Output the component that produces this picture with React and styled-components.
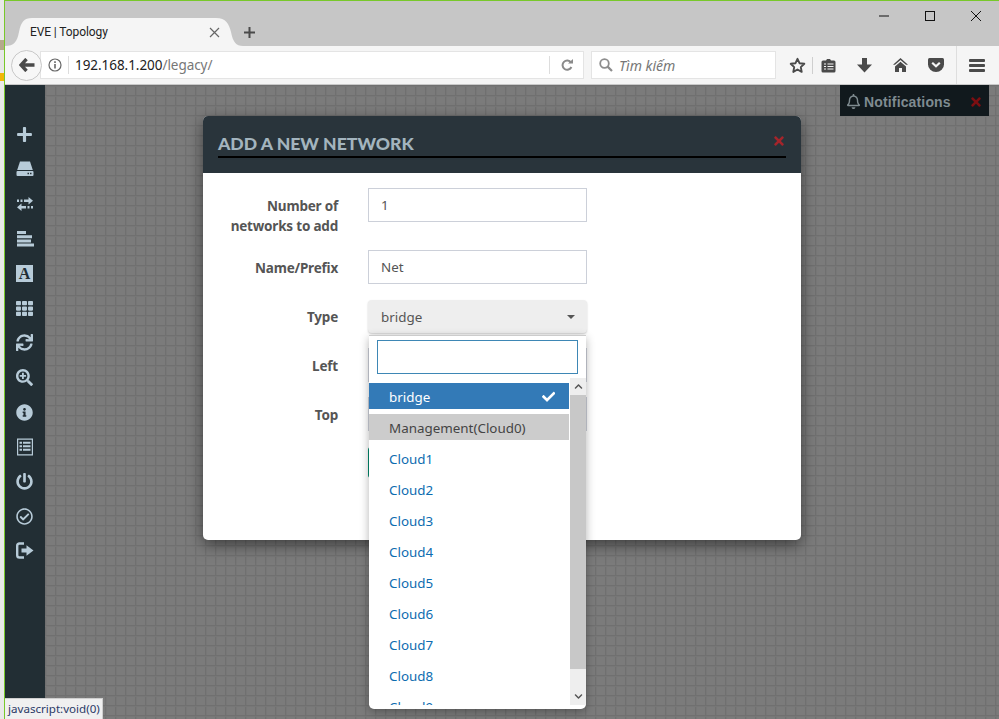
import React from "react";
import styled, { createGlobalStyle } from "styled-components";
import {
  FaPlus,
  FaTh,
  FaSync,
  FaSearchPlus,
  FaInfoCircle,
  FaPowerOff,
  FaRegCheckCircle,
  FaTimes,
  FaCheck,
  FaRegBell,
  FaChevronUp,
  FaChevronDown,
} from "react-icons/fa";

const uiFont = `"Noto Sans", "Open Sans", sans-serif`;

const GlobalStyle = createGlobalStyle`
  html, body { margin: 0; padding: 0; background: #f0f0f0; }
  * { box-sizing: border-box; }
`;

const Desktop = styled.div`
  display: flex;
  width: 999px;
  height: 719px;
  overflow: hidden;
  font-family: ${uiFont};
  position: relative;
`;

const BehindWindow = styled.div`
  width: 4px;
  flex: none;
  background: linear-gradient(#e8e8e8 0 40px, #b5a98c 40px 50px, #e8e8e8 50px 73px, #f2b705 73px 81px, #e9e9e9 81px);
`;

const BrowserWindow = styled.div`
  flex: 1;
  display: flex;
  flex-direction: column;
  border-left: 1px solid #78c82a;
  border-top: 1px solid #78c82a;
  min-width: 0;
`;

const TitleBar = styled.div`
  height: 45px;
  flex: none;
  background: #c6c6c6;
  display: flex;
  align-items: flex-end;
  position: relative;
`;

const Tab = styled.div`
  position: relative;
  width: 238px;
  height: 28px;
  display: flex;
  align-items: center;
  padding: 0 0 0 25px;
  font-family: Roboto, sans-serif;
  font-size: 12px;
  letter-spacing: -0.1px;
  color: #222;
`;

const TabShape = styled.svg`
  position: absolute;
  left: 0;
  top: 0;
`;

const TabTitle = styled.span`
  position: relative;
  flex: 1;
`;

const TabClose = styled.svg`
  position: relative;
  margin-right: 23px;
`;

const NewTab = styled.svg`
  margin: 0 0 7px 0;
`;

const WindowControls = styled.div`
  margin-left: auto;
  align-self: flex-start;
  display: flex;
  align-items: center;
  gap: 36px;
  padding: 10px 18px 0 0;
`;

const Toolbar = styled.div`
  height: 39px;
  flex: none;
  background: #f5f5f5;
  border-bottom: 1px solid #c9c9c9;
  display: flex;
  align-items: center;
  padding: 0 0 0 6px;
`;

const BackButton = styled.div`
  width: 31px;
  height: 31px;
  flex: none;
  border-radius: 50%;
  background: #f7f7f7;
  border: 1px solid #c8c8c8;
  display: flex;
  align-items: center;
  justify-content: center;
  position: relative;
  z-index: 1;
`;

const UrlBar = styled.div`
  width: 544px;
  height: 28px;
  margin-left: -2px;
  background: #fff;
  border: 1px solid #e4e4e4;
  display: flex;
  align-items: center;
  padding-left: 7px;
  font-size: 13.5px;
  color: #222;
`;

const UrlText = styled.span`
  margin-left: 6px;
  padding-left: 6px;
  border-left: 1px solid #ddd;
  line-height: 18px;
  letter-spacing: -0.05px;
`;

const UrlPath = styled.span`
  color: #777;
`;

const ReloadBox = styled.div`
  margin-left: auto;
  width: 34px;
  height: 18px;
  border-left: 1px solid #ddd;
  display: flex;
  align-items: center;
  justify-content: center;
`;

const SearchBox = styled.div`
  width: 185px;
  height: 28px;
  margin-left: 7px;
  background: #fff;
  border: 1px solid #e4e4e4;
  display: flex;
  align-items: center;
  gap: 6px;
  padding-left: 7px;
  font-size: 14px;
  font-style: italic;
  color: #777;
`;

const ToolIcons = styled.div`
  display: flex;
  align-items: center;
  margin-left: 12px;
  height: 38px;
  flex: 1;
`;

const ToolSlot = styled.div`
  width: ${(p) => p.$w}px;
  margin-left: ${(p) => p.$gap || 0}px;
  height: 38px;
  display: flex;
  align-items: center;
  justify-content: center;
  flex: none;
  ${(p) => p.$divided && "border-left: 1px solid #dedede;"}
`;

const ToolSeparator = styled.div`
  width: 1px;
  height: 17px;
  background: #cfcfcf;
  flex: none;
`;

const PageArea = styled.div`
  flex: 1;
  display: flex;
  min-height: 0;
  position: relative;
`;

const Sidebar = styled.div`
  width: 40px;
  flex: none;
  background: #222e34;
  padding: 32px 1px 0 0;
  display: flex;
  flex-direction: column;
`;

const SideItem = styled.div`
  height: 34.75px;
  display: flex;
  align-items: center;
  justify-content: center;
  color: #b7cbd8;
  font-size: 17px;
  flex: none;
`;

const FontBadge = styled.span`
  width: 17px;
  height: 17px;
  background: #b7cbd8;
  color: #222e34;
  font-family: "Liberation Serif", serif;
  font-weight: bold;
  font-size: 16px;
  line-height: 17px;
  text-align: center;
`;

const Canvas = styled.div`
  flex: 1;
  min-width: 0;
  background-color: #7b7b7b;
  background-image:
    linear-gradient(#707070 1px, #777 1px, #777 2px, transparent 2px),
    linear-gradient(90deg, #707070 1px, #777 1px, #777 2px, transparent 2px);
  background-size: 10px 10px;
  padding: 31px 0 0 158px;
  position: relative;
`;

const Notifications = styled.div`
  position: absolute;
  top: 0;
  right: 10px;
  width: 149px;
  height: 31px;
  background: #11191d;
  color: #7f8b90;
  font-family: "Liberation Sans", sans-serif;
  font-weight: bold;
  font-size: 14px;
  letter-spacing: 0.15px;
  display: flex;
  align-items: center;
  padding: 2px 0 0 6px;
  gap: 3px;
`;

const NotifyBell = styled(FaRegBell)`
  font-size: 15px;
  margin-top: -1px;
`;

const NotifyClose = styled(FaTimes)`
  color: #7d0f12;
  font-size: 14px;
  margin-left: auto;
  margin-right: 6px;
`;

const Modal = styled.div`
  width: 598px;
  height: 424px;
  background: #fff;
  border-radius: 5px;
  box-shadow: 0 5px 15px rgba(0, 0, 0, 0.5);
  display: flex;
  flex-direction: column;
`;

const ModalHeader = styled.div`
  height: 57px;
  flex: none;
  background: #29343b;
  border-radius: 5px 5px 0 0;
  padding: 15px 15px 0;
`;

const ModalTitle = styled.div`
  height: 27px;
  border-bottom: 2px solid #000;
  font-family: Lato, sans-serif;
  font-weight: 900;
  font-size: 17.6px;
  line-height: 25px;
  color: #a3b4be;
  display: flex;
  justify-content: space-between;
`;

const ModalClose = styled(FaTimes)`
  color: #a5252b;
  font-size: 14px;
  margin: 3px 0 0 0;
`;

const FormGrid = styled.div`
  display: grid;
  grid-template-columns: 135px 219px;
  column-gap: 30px;
  row-gap: 15px;
  padding: 15px 0 0 0;
  font-size: 13.4px;
  color: #555;
`;

const Label = styled.label`
  font-weight: 700;
  font-size: 13.5px;
  letter-spacing: -0.2px;
  text-align: right;
  line-height: 20px;
  padding-top: 8px;
  margin-bottom: -1px;
  color: #555;
`;

const TextInput = styled.input`
  width: 219px;
  height: 34px;
  border: 1px solid #ccd0d9;
  padding: 0 12px;
  font: 13.4px ${uiFont};
  color: #555;
  background: #fff;
  outline: none;
`;

const SelectField = styled.div`
  position: relative;
  width: 219px;
  height: 34px;
`;

const SelectButton = styled.div`
  height: 33px;
  margin-top: 1px;
  background: #eee;
  border-radius: 4px;
  box-shadow: 0 1px 2px rgba(0, 0, 0, 0.2);
  display: flex;
  align-items: center;
  justify-content: space-between;
  padding: 0 12px 0 13px;
  color: #555;
`;

const Caret = styled.span`
  width: 0;
  height: 0;
  border-left: 4px solid transparent;
  border-right: 4px solid transparent;
  border-top: 4px solid #555;
`;

const Dropdown = styled.div`
  position: absolute;
  z-index: 5;
  left: 1px;
  top: 36px;
  width: 217px;
  height: 374px;
  background: #fff;
  border-top: 1px solid #ccc;
  border-radius: 0 0 5px 5px;
  box-shadow: 0 3px 10px rgba(0, 0, 0, 0.3);
  display: flex;
  flex-direction: column;
`;

const DropSearch = styled.div`
  height: 34px;
  margin: 4px 8px 4px;
  flex: none;
  border: 1px solid #3e87b5;
  background: #fff;
`;

const DropBody = styled.div`
  height: 327px;
  flex: none;
  display: flex;
`;

const OptionList = styled.div`
  flex: 1;
  min-width: 0;
  overflow: hidden;
  padding-top: 5px;
  display: flex;
  flex-direction: column;
  gap: 5px;
`;

const Option = styled.div`
  height: 26px;
  flex: none;
  margin-right: 1px;
  padding: 1px 14px 0 20px;
  display: flex;
  align-items: center;
  justify-content: space-between;
  font-size: 13.4px;
  background: ${(p) => (p.$selected ? "#337ab7" : p.$hover ? "#ccc" : "#fff")};
  color: ${(p) => (p.$selected ? "#fff" : p.$hover ? "#444" : "#0d6cb0")};
`;

const ScrollBar = styled.div`
  width: 16px;
  flex: none;
  background: #eee;
  display: flex;
  flex-direction: column;
`;

const ScrollArrow = styled.div`
  height: 17px;
  flex: none;
  display: flex;
  align-items: center;
  justify-content: center;
  color: #555;
  font-size: 9px;
  ${(p) => p.$end && "margin-top: auto;"}
`;

const ScrollThumb = styled.div`
  height: 274px;
  flex: none;
  background: #c8c8c8;
`;

const SaveButton = styled.div`
  grid-column: 2;
  width: 70px;
  height: 31px;
  margin-top: 1px;
  background: #00876b;
  border-radius: 3px;
`;

const StatusTip = styled.div`
  position: absolute;
  left: 5px;
  bottom: 0;
  width: 98px;
  height: 21px;
  background: #f0f0f0;
  border: 1px solid #cfcfcf;
  border-bottom: 0;
  border-left: 0;
  padding-left: 3px;
  font-size: 11.6px;
  line-height: 20px;
  color: #2b3a67;
  white-space: nowrap;
  z-index: 6;
`;

const SideGlyph = ({ children }) => (
  <svg width="18" height="18" viewBox="0 0 18 18" fill="currentColor">
    {children}
  </svg>
);

const sideIcons = [
  <FaPlus />,
  <SideGlyph>
    <path d="M4 1.5H14L16.8 10H1.2Z" />
    <path d="M1.5 11H16.5Q17.5 11 17.5 12V15Q17.5 16 16.5 16H1.5Q0.5 16 0.5 15V12Q0.5 11 1.5 11ZM11.5 12.8V14.2H13V12.8ZM14 12.8V14.2H15.5V12.8Z" fillRule="evenodd" />
  </SideGlyph>,
  <SideGlyph>
    <path d="M1 4.5H3V7H1ZM4.5 4.5H6.5V7H4.5ZM8 4.5H12.5V2L17 5.8L12.5 9.5V7H8Z" />
    <path d="M17 11H15V13.5H17ZM13.5 11H11.5V13.5H13.5ZM10 11H5.5V8.5L1 12.3L5.5 16V13.5H10Z" />
  </SideGlyph>,
  <SideGlyph>
    <path d="M1 1H10V4H1ZM1 5.2H16V8.2H1ZM1 9.4H15V12.4H1ZM1 13.6H18V16.6H1Z" />
  </SideGlyph>,
  <FontBadge>A</FontBadge>,
  <FaTh />,
  <FaSync />,
  <FaSearchPlus />,
  <FaInfoCircle />,
  <SideGlyph>
    <path d="M1 0.5H17V17.5H1ZM2.2 1.8V16.2H15.8V1.8ZM3.5 3.8H6V5.8H3.5ZM7 3.8H14.5V5.8H7ZM3.5 7.3H6V9.3H3.5ZM7 7.3H14.5V9.3H7ZM3.5 10.8H6V12.8H3.5ZM7 10.8H14.5V12.8H7Z" fillRule="evenodd" />
  </SideGlyph>,
  <FaPowerOff />,
  <FaRegCheckCircle />,
  <SideGlyph>
    <path d="M8 1.5H3.5Q1.2 1.5 1.2 3.8V13.2Q1.2 15.5 3.5 15.5H8" fill="none" stroke="currentColor" strokeWidth="2.4" />
    <path d="M5.5 6.5H10.5V3.2L17.5 8.5L10.5 13.8V10.5H5.5Z" />
  </SideGlyph>,
];

const clouds = ["Cloud1", "Cloud2", "Cloud3", "Cloud4", "Cloud5", "Cloud6", "Cloud7", "Cloud8", "Cloud9"];

const ToolGlyph = ({ children, w = 20, h = 20 }) => (
  <svg width={w} height={h} viewBox={`0 0 ${w} ${h}`} fill="#4a4a4a">
    {children}
  </svg>
);

const App = () => {
  return (
    <Desktop>
      <GlobalStyle />
      <BehindWindow />
      <BrowserWindow>
        <TitleBar>
          <Tab>
            <TabShape width="238" height="28" viewBox="0 0 238 28">
              <path d="M0 28C9 28 12 24 14 14C16 4 19 0 27 0L211 0C221 0 224 6 226 14C228 24 231 28 238 28Z" fill="#f5f5f5" />
            </TabShape>
            <TabTitle>EVE | Topology</TabTitle>
            <TabClose width="11" height="11" viewBox="0 0 11 11">
              <path d="M1 1L10 10M10 1L1 10" stroke="#666" strokeWidth="1.2" />
            </TabClose>
          </Tab>
          <NewTab width="13" height="13" viewBox="0 0 13 13">
            <path d="M6.5 1V12M1 6.5H12" stroke="#4a4a4a" strokeWidth="2" />
          </NewTab>
          <WindowControls>
            <svg width="10" height="10" viewBox="0 0 10 10">
              <path d="M0 5H10" stroke="#111" />
            </svg>
            <svg width="10" height="10" viewBox="0 0 10 10">
              <rect x="0.5" y="0.5" width="9" height="9" fill="none" stroke="#111" />
            </svg>
            <svg width="10" height="10" viewBox="0 0 10 10">
              <path d="M0 0L10 10M10 0L0 10" stroke="#111" />
            </svg>
          </WindowControls>
        </TitleBar>
        <Toolbar>
          <BackButton>
            <svg width="16" height="14" viewBox="0 0 16 14">
              <path d="M7.5 1L2 7L7.5 13M2.5 7H15.5" fill="none" stroke="#4a4a4a" strokeWidth="3.4" />
            </svg>
          </BackButton>
          <UrlBar>
            <svg width="14" height="14" viewBox="0 0 14 14">
              <circle cx="7" cy="7" r="6" fill="none" stroke="#666" strokeWidth="1.2" />
              <path d="M7 6V10.5M7 3.2V5" stroke="#666" strokeWidth="1.6" />
            </svg>
            <UrlText>
              192.168.1.200<UrlPath>/legacy/</UrlPath>
            </UrlText>
            <ReloadBox>
              <svg width="12" height="12" viewBox="0 0 12 12">
                <path d="M10 3.6A4.6 4.6 0 1 0 10.4 8" fill="none" stroke="#8a8a8a" strokeWidth="2" />
                <path d="M7 4.5H12V0Z" fill="#8a8a8a" />
              </svg>
            </ReloadBox>
          </UrlBar>
          <SearchBox>
            <svg width="14" height="14" viewBox="0 0 14 14">
              <circle cx="5.5" cy="5.5" r="4.3" fill="none" stroke="#8d8d8d" strokeWidth="1.8" />
              <path d="M8.6 8.6L13 13" stroke="#8d8d8d" strokeWidth="2.2" />
            </svg>
            Tìm kiếm
          </SearchBox>
          <ToolIcons>
            <ToolSlot $w={18}>
              <ToolGlyph w={17} h={17}>
                <path d="M8.5 1.8L10.5 6.2L15.3 6.8L11.8 10.1L12.7 14.9L8.5 12.5L4.3 14.9L5.2 10.1L1.7 6.8L6.5 6.2Z" fill="none" stroke="#4a4a4a" strokeWidth="1.9" strokeLinejoin="round" />
              </ToolGlyph>
            </ToolSlot>
            <ToolSlot $w={12}>
              <ToolSeparator />
            </ToolSlot>
            <ToolSlot $w={20}>
              <ToolGlyph w={15} h={15}>
                <path d="M2 2.5H5L6 1H9L10 2.5H13Q14.5 2.5 14.5 4V13Q14.5 14.5 13 14.5H2Q0.5 14.5 0.5 13V4Q0.5 2.5 2 2.5Z" />
                <path d="M3 6H5M6.5 6H12.5M3 8.5H5M6.5 8.5H12.5M3 11H5M6.5 11H12.5" stroke="#f5f5f5" strokeWidth="1.1" />
              </ToolGlyph>
            </ToolSlot>
            <ToolSlot $w={36} $gap={8}>
              <ToolGlyph w={15} h={15}>
                <path d="M5 0H10V6.5H15L7.5 14.5L0 6.5H5Z" />
              </ToolGlyph>
            </ToolSlot>
            <ToolSlot $w={36}>
              <ToolGlyph w={15} h={14}>
                <path d="M7.5 0L15 6.8H13L7.5 2L2 6.8H0Z" />
                <path d="M7.5 3.8L13 8.5V14H9V10H6V14H2V8.5Z" />
              </ToolGlyph>
            </ToolSlot>
            <ToolSlot $w={36}>
              <ToolGlyph w={16} h={14}>
                <path d="M1.5 0H14.5Q16 0 16 1.5V6.5A8 7.5 0 0 1 0 6.5V1.5Q0 0 1.5 0Z" />
                <path d="M4.2 4.8L8 8.3L11.8 4.8" fill="none" stroke="#f5f5f5" strokeWidth="2.2" />
              </ToolGlyph>
            </ToolSlot>
            <ToolSlot $w={40} $gap={2} $divided>
              <ToolGlyph w={16} h={13}>
                <path d="M1 0H15Q16 0 16 1V2.2Q16 3 15 3H1Q0 3 0 2.2V1Q0 0 1 0ZM1 5H15Q16 5 16 6V7.2Q16 8 15 8H1Q0 8 0 7.2V6Q0 5 1 5ZM1 10H15Q16 10 16 11V12.2Q16 13 15 13H1Q0 13 0 12.2V11Q0 10 1 10Z" />
              </ToolGlyph>
            </ToolSlot>
          </ToolIcons>
        </Toolbar>
        <PageArea>
          <Sidebar>
            {sideIcons.map((icon, i) => (
              <SideItem key={i}>{icon}</SideItem>
            ))}
          </Sidebar>
          <Canvas>
            <Notifications>
              <NotifyBell />
              Notifications
              <NotifyClose />
            </Notifications>
            <Modal>
              <ModalHeader>
                <ModalTitle>
                  ADD A NEW NETWORK
                  <ModalClose />
                </ModalTitle>
              </ModalHeader>
              <FormGrid>
                <Label>
                  Number of
                  <br />
                  networks to add
                </Label>
                <TextInput defaultValue="1" />
                <Label>Name/Prefix</Label>
                <TextInput defaultValue="Net" />
                <Label>Type</Label>
                <SelectField>
                  <SelectButton>
                    bridge
                    <Caret />
                  </SelectButton>
                  <Dropdown>
                    <DropSearch />
                    <DropBody>
                      <OptionList>
                        <Option $selected>
                          bridge
                          <FaCheck />
                        </Option>
                        <Option $hover>Management(Cloud0)</Option>
                        {clouds.map((name) => (
                          <Option key={name}>{name}</Option>
                        ))}
                      </OptionList>
                      <ScrollBar>
                        <ScrollArrow>
                          <FaChevronUp />
                        </ScrollArrow>
                        <ScrollThumb />
                        <ScrollArrow $end>
                          <FaChevronDown />
                        </ScrollArrow>
                      </ScrollBar>
                    </DropBody>
                  </Dropdown>
                </SelectField>
                <Label>Left</Label>
                <TextInput />
                <Label>Top</Label>
                <TextInput />
                <SaveButton />
              </FormGrid>
            </Modal>
          </Canvas>
        </PageArea>
      </BrowserWindow>
      <StatusTip>javascript:void(0)</StatusTip>
    </Desktop>
  );
};

export default App;
